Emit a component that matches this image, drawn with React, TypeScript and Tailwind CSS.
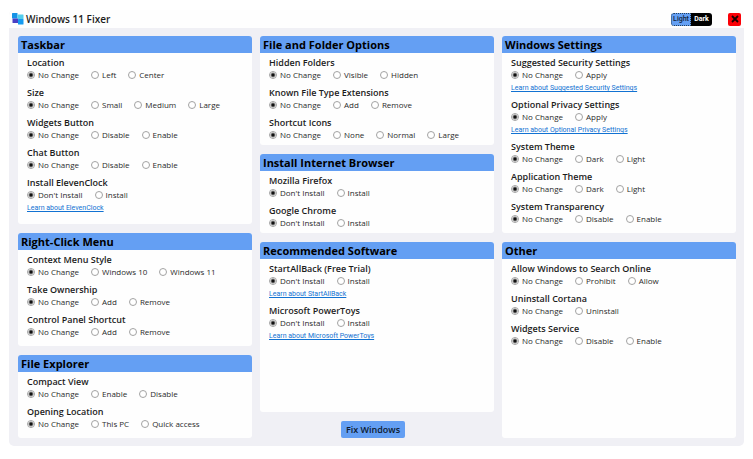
import React, { useState } from "react";

type Group = { title: string; options: string[]; link?: string };

const taskbar: Group[] = [
  { title: "Location", options: ["No Change", "Left", "Center"] },
  { title: "Size", options: ["No Change", "Small", "Medium", "Large"] },
  { title: "Widgets Button", options: ["No Change", "Disable", "Enable"] },
  { title: "Chat Button", options: ["No Change", "Disable", "Enable"] },
  { title: "Install ElevenClock", options: ["Don't Install", "Install"], link: "Learn about ElevenClock" },
];

const rightClick: Group[] = [
  { title: "Context Menu Style", options: ["No Change", "Windows 10", "Windows 11"] },
  { title: "Take Ownership", options: ["No Change", "Add", "Remove"] },
  { title: "Control Panel Shortcut", options: ["No Change", "Add", "Remove"] },
];

const explorer: Group[] = [
  { title: "Compact View", options: ["No Change", "Enable", "Disable"] },
  { title: "Opening Location", options: ["No Change", "This PC", "Quick access"] },
];

const fileOptions: Group[] = [
  { title: "Hidden Folders", options: ["No Change", "Visible", "Hidden"] },
  { title: "Known File Type Extensions", options: ["No Change", "Add", "Remove"] },
  { title: "Shortcut Icons", options: ["No Change", "None", "Normal", "Large"] },
];

const browsers: Group[] = [
  { title: "Mozilla Firefox", options: ["Don't Install", "Install"] },
  { title: "Google Chrome", options: ["Don't Install", "Install"] },
];

const software: Group[] = [
  { title: "StartAllBack (Free Trial)", options: ["Don't Install", "Install"], link: "Learn about StartAllBack" },
  { title: "Microsoft PowerToys", options: ["Don't Install", "Install"], link: "Learn about Microsoft PowerToys" },
];

const settings: Group[] = [
  { title: "Suggested Security Settings", options: ["No Change", "Apply"], link: "Learn about Suggested Security Settings" },
  { title: "Optional Privacy Settings", options: ["No Change", "Apply"], link: "Learn about Optional Privacy Settings" },
  { title: "System Theme", options: ["No Change", "Dark", "Light"] },
  { title: "Application Theme", options: ["No Change", "Dark", "Light"] },
  { title: "System Transparency", options: ["No Change", "Disable", "Enable"] },
];

const other: Group[] = [
  { title: "Allow Windows to Search Online", options: ["No Change", "Prohibit", "Allow"] },
  { title: "Uninstall Cortana", options: ["No Change", "Uninstall"] },
  { title: "Widgets Service", options: ["No Change", "Disable", "Enable"] },
];

function RadioGroup({ title, options, link }: Group) {
  return (
    <fieldset>
      <legend className="text-[9px] leading-[13px] font-semibold text-[#1c1c1c]">{title}</legend>
      <div className="flex h-3 items-center gap-3 text-[8px] leading-[12px] text-[#2b2b2b]">
        {options.map((option, i) => (
          <label key={option} className="flex items-center gap-[3px] whitespace-nowrap">
            <input
              type="radio"
              name={title}
              defaultChecked={i === 0}
              className="size-2 appearance-none rounded-full border border-[#a3a3a3] bg-white checked:bg-[radial-gradient(circle,#111_0_1px,#fff_3px)]"
            />
            {option}
          </label>
        ))}
      </div>
      {link && (
        <a href="#" className="block pt-[2px] font-[Roboto,sans-serif] text-[7px] leading-[10px] text-[#1272d2] underline">
          {link}
        </a>
      )}
    </fieldset>
  );
}

function Card({ title, groups, className = "" }: { title: string; groups: Group[]; className?: string }) {
  return (
    <section className={`overflow-hidden rounded-[3px] bg-[#fefefe] ${className}`}>
      <h2 className="bg-[#649ff3] px-[3px] text-[11px] leading-[17px] font-bold text-black">{title}</h2>
      <div className="flex flex-col gap-[5px] px-[9px] pt-[3px]">
        {groups.map((group) => (
          <RadioGroup key={group.title} {...group} />
        ))}
      </div>
    </section>
  );
}

function Logo() {
  return (
    <svg viewBox="0 0 24 24" className="size-3" aria-hidden="true">
      <rect x="0" y="0" width="11" height="11" rx="1" fill="#1592e6" />
      <rect x="11" y="3" width="12" height="9" rx="1" fill="#53cdec" />
      <rect x="1" y="11" width="11" height="9" rx="1" fill="#4a3fc4" />
      <rect x="12" y="12" width="11" height="11" rx="1" fill="#159af0" />
    </svg>
  );
}

export default function App() {
  const [theme, setTheme] = useState("Light");
  return (
    <div className="flex min-h-screen flex-col bg-white px-[9px] pt-[10px] pb-[13px] font-['Open_Sans','Noto_Sans',sans-serif]">
      <div className="flex grow flex-col overflow-hidden rounded-[5px] bg-[#f0f0f5]">
        <header className="flex h-[18px] items-center bg-[#fefefe] px-[3px]">
          <Logo />
          <h1 className="ml-[2px] grow text-[10px] leading-[18px] font-semibold text-[#1c1c1c]">Windows 11 Fixer</h1>
          <div className="mr-4 flex font-[Roboto,sans-serif] text-[7px] leading-[13px]">
            <button
              type="button"
              aria-pressed={theme === "Light"}
              onClick={() => setTheme("Light")}
              className="w-5 rounded-l-[3px] border border-dotted border-[#24415f] bg-[#649ff3] leading-[11px] font-medium text-[#10243d]"
            >
              Light
            </button>
            <button
              type="button"
              aria-pressed={theme === "Dark"}
              onClick={() => setTheme("Dark")}
              className="w-[21px] rounded-r-[3px] bg-black font-bold text-white"
            >
              Dark
            </button>
          </div>
          <button type="button" aria-label="Close" className="flex size-[13px] items-center justify-center rounded-[2px] bg-[#fb0007]">
            <svg viewBox="0 0 8 8" className="size-2" stroke="#1b0000" strokeWidth="1.8" aria-hidden="true">
              <path d="M1 1L7 7M7 1L1 7" />
            </svg>
          </button>
        </header>
        <main className="grid grow grid-cols-3 gap-2 py-2 pr-2 pl-[9px]">
          <div className="flex flex-col gap-[9px]">
            <Card title="Taskbar" groups={taskbar} className="pb-[11px]" />
            <Card title="Right-Click Menu" groups={rightClick} className="pb-2" />
            <Card title="File Explorer" groups={explorer} className="grow pb-2" />
          </div>
          <div className="flex flex-col gap-[9px]">
            <Card title="File and Folder Options" groups={fileOptions} className="pb-1" />
            <Card title="Install Internet Browser" groups={browsers} className="pb-1" />
            <Card title="Recommended Software" groups={software} className="grow pb-2" />
            <button
              type="button"
              className="mr-2 self-center rounded-[2px] bg-[#649ff3] px-[5px] text-[9px] leading-[17px] font-semibold text-[#0c1a30]"
            >
              Fix Windows
            </button>
          </div>
          <div className="flex flex-col gap-[9px]">
            <Card title="Windows Settings" groups={settings} className="pb-2" />
            <Card title="Other" groups={other} className="grow pb-2" />
          </div>
        </main>
      </div>
    </div>
  );
}
